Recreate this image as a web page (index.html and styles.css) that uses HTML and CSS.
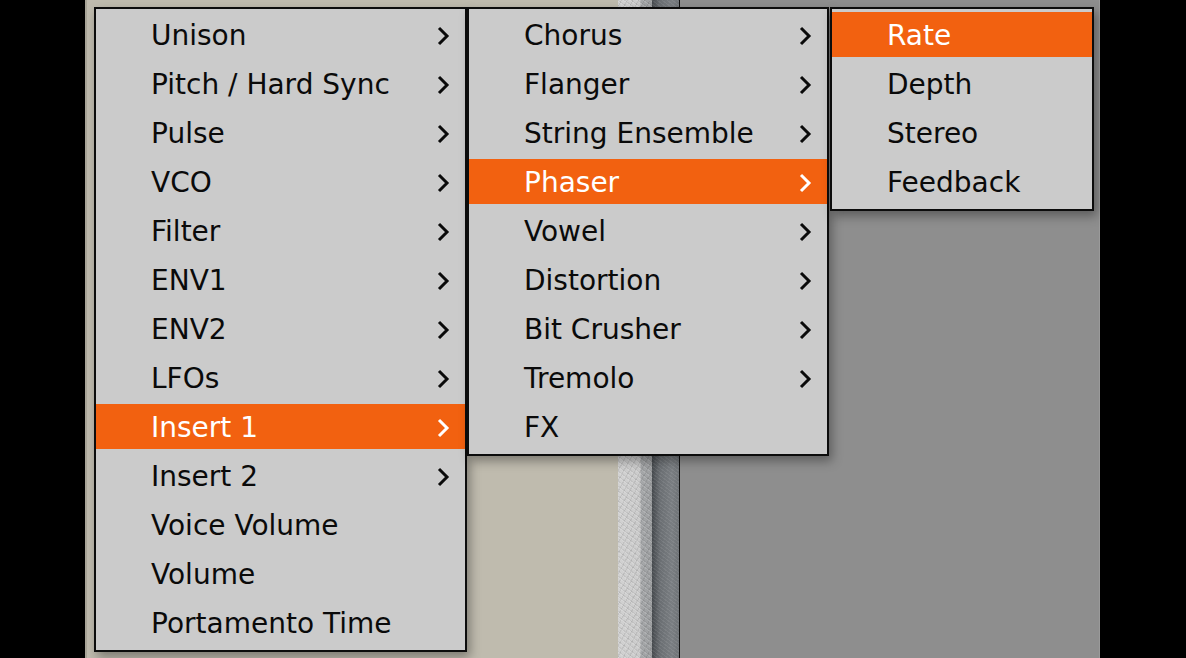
FILE: index.html
```html
<!DOCTYPE html>
<html>
<head>
<meta charset="utf-8">
<link rel="stylesheet" href="styles.css">
</head>
<body>
<div class="stage">
  <div class="window">
    <div class="panel-beige"></div>
    <div class="strip-light"></div>
    <div class="strip-dark"></div>
    <div class="panel-gray"></div>
  </div>

  <ul class="menu menu-main">
    <li class="item sub">Unison<svg class="chev" viewBox="0 0 14 20"><polyline points="3,2 11,10 3,18"/></svg></li>
    <li class="item sub">Pitch / Hard Sync<svg class="chev" viewBox="0 0 14 20"><polyline points="3,2 11,10 3,18"/></svg></li>
    <li class="item sub">Pulse<svg class="chev" viewBox="0 0 14 20"><polyline points="3,2 11,10 3,18"/></svg></li>
    <li class="item sub">VCO<svg class="chev" viewBox="0 0 14 20"><polyline points="3,2 11,10 3,18"/></svg></li>
    <li class="item sub">Filter<svg class="chev" viewBox="0 0 14 20"><polyline points="3,2 11,10 3,18"/></svg></li>
    <li class="item sub">ENV1<svg class="chev" viewBox="0 0 14 20"><polyline points="3,2 11,10 3,18"/></svg></li>
    <li class="item sub">ENV2<svg class="chev" viewBox="0 0 14 20"><polyline points="3,2 11,10 3,18"/></svg></li>
    <li class="item sub">LFOs<svg class="chev" viewBox="0 0 14 20"><polyline points="3,2 11,10 3,18"/></svg></li>
    <li class="item sub active">Insert 1<svg class="chev" viewBox="0 0 14 20"><polyline points="3,2 11,10 3,18"/></svg></li>
    <li class="item sub">Insert 2<svg class="chev" viewBox="0 0 14 20"><polyline points="3,2 11,10 3,18"/></svg></li>
    <li class="item">Voice Volume</li>
    <li class="item">Volume</li>
    <li class="item">Portamento Time</li>
  </ul>

  <ul class="menu menu-fx">
    <li class="item sub">Chorus<svg class="chev" viewBox="0 0 14 20"><polyline points="3,2 11,10 3,18"/></svg></li>
    <li class="item sub">Flanger<svg class="chev" viewBox="0 0 14 20"><polyline points="3,2 11,10 3,18"/></svg></li>
    <li class="item sub">String Ensemble<svg class="chev" viewBox="0 0 14 20"><polyline points="3,2 11,10 3,18"/></svg></li>
    <li class="item sub active">Phaser<svg class="chev" viewBox="0 0 14 20"><polyline points="3,2 11,10 3,18"/></svg></li>
    <li class="item sub">Vowel<svg class="chev" viewBox="0 0 14 20"><polyline points="3,2 11,10 3,18"/></svg></li>
    <li class="item sub">Distortion<svg class="chev" viewBox="0 0 14 20"><polyline points="3,2 11,10 3,18"/></svg></li>
    <li class="item sub">Bit Crusher<svg class="chev" viewBox="0 0 14 20"><polyline points="3,2 11,10 3,18"/></svg></li>
    <li class="item sub">Tremolo<svg class="chev" viewBox="0 0 14 20"><polyline points="3,2 11,10 3,18"/></svg></li>
    <li class="item">FX</li>
  </ul>

  <ul class="menu menu-param">
    <li class="item active">Rate</li>
    <li class="item">Depth</li>
    <li class="item">Stereo</li>
    <li class="item">Feedback</li>
  </ul>
</div>
</body>
</html>
```
FILE: styles.css
```css
* { box-sizing: border-box; }
html, body {
  margin: 0;
  padding: 0;
  background: #000;
  width: 1186px;
  height: 658px;
  overflow: hidden;
}
.stage {
  position: relative;
  width: 1186px;
  height: 658px;
  padding-left: 85px;
  padding-right: 86px;
}
.window {
  display: flex;
  height: 658px;
  width: 1015px;
}
.panel-beige {
  width: 533px;
  background: #bfbbae;
  border-left: 2px solid #a9a598;
}
.strip-light {
  width: 34px;
  background:
    repeating-linear-gradient(37deg, rgba(255,255,255,0.14) 0 1px, rgba(0,0,0,0.06) 1px 2px, transparent 2px 4px),
    repeating-linear-gradient(-61deg, rgba(0,0,0,0.08) 0 1px, transparent 1px 5px),
    linear-gradient(90deg, #d2d2d2 0, #cbcbcb 22px, #a6a8aa 23px, #9c9ea0 34px);
}
.strip-dark {
  width: 28px;
  background:
    repeating-linear-gradient(37deg, rgba(255,255,255,0.08) 0 1px, transparent 1px 3px),
    linear-gradient(90deg, #45494d 0, #6a6e72 8px, #7a7e82 20px, #6c7074 28px);
  border-right: 1px solid #111;
}
.panel-gray {
  flex: 1;
  background: #8e8e8e;
  border-right: 1px solid #9a9a9a;
}

.menu {
  position: absolute;
  top: 7px;
  margin: 0;
  padding: 3px 0 5px;
  list-style: none;
  display: flex;
  flex-direction: column;
  gap: 4px;
  background: #cbcbcb;
  border: 2px solid #0c0c0c;
  box-shadow: 3px 5px 10px rgba(0,0,0,0.35);
  font-family: "DejaVu Sans", sans-serif;
  font-size: 28px;
  color: #0a0a0a;
}
.menu-main { left: 94px; width: 373px; }
.menu-fx { left: 467px; width: 362px; }
.menu-param { left: 830px; width: 264px; }

.item {
  position: relative;
  height: 45px;
  padding-left: 55px;
  padding-top: 2px;
  display: flex;
  align-items: center;
  line-height: 1;
  white-space: nowrap;
}
.item.active {
  background: #f26110;
  color: #fff;
}
.chev {
  position: absolute;
  right: 15px;
  top: 50%;
  width: 14px;
  height: 20px;
  margin-top: -9px;
  fill: none;
  stroke: currentColor;
  stroke-width: 3;
}
```
